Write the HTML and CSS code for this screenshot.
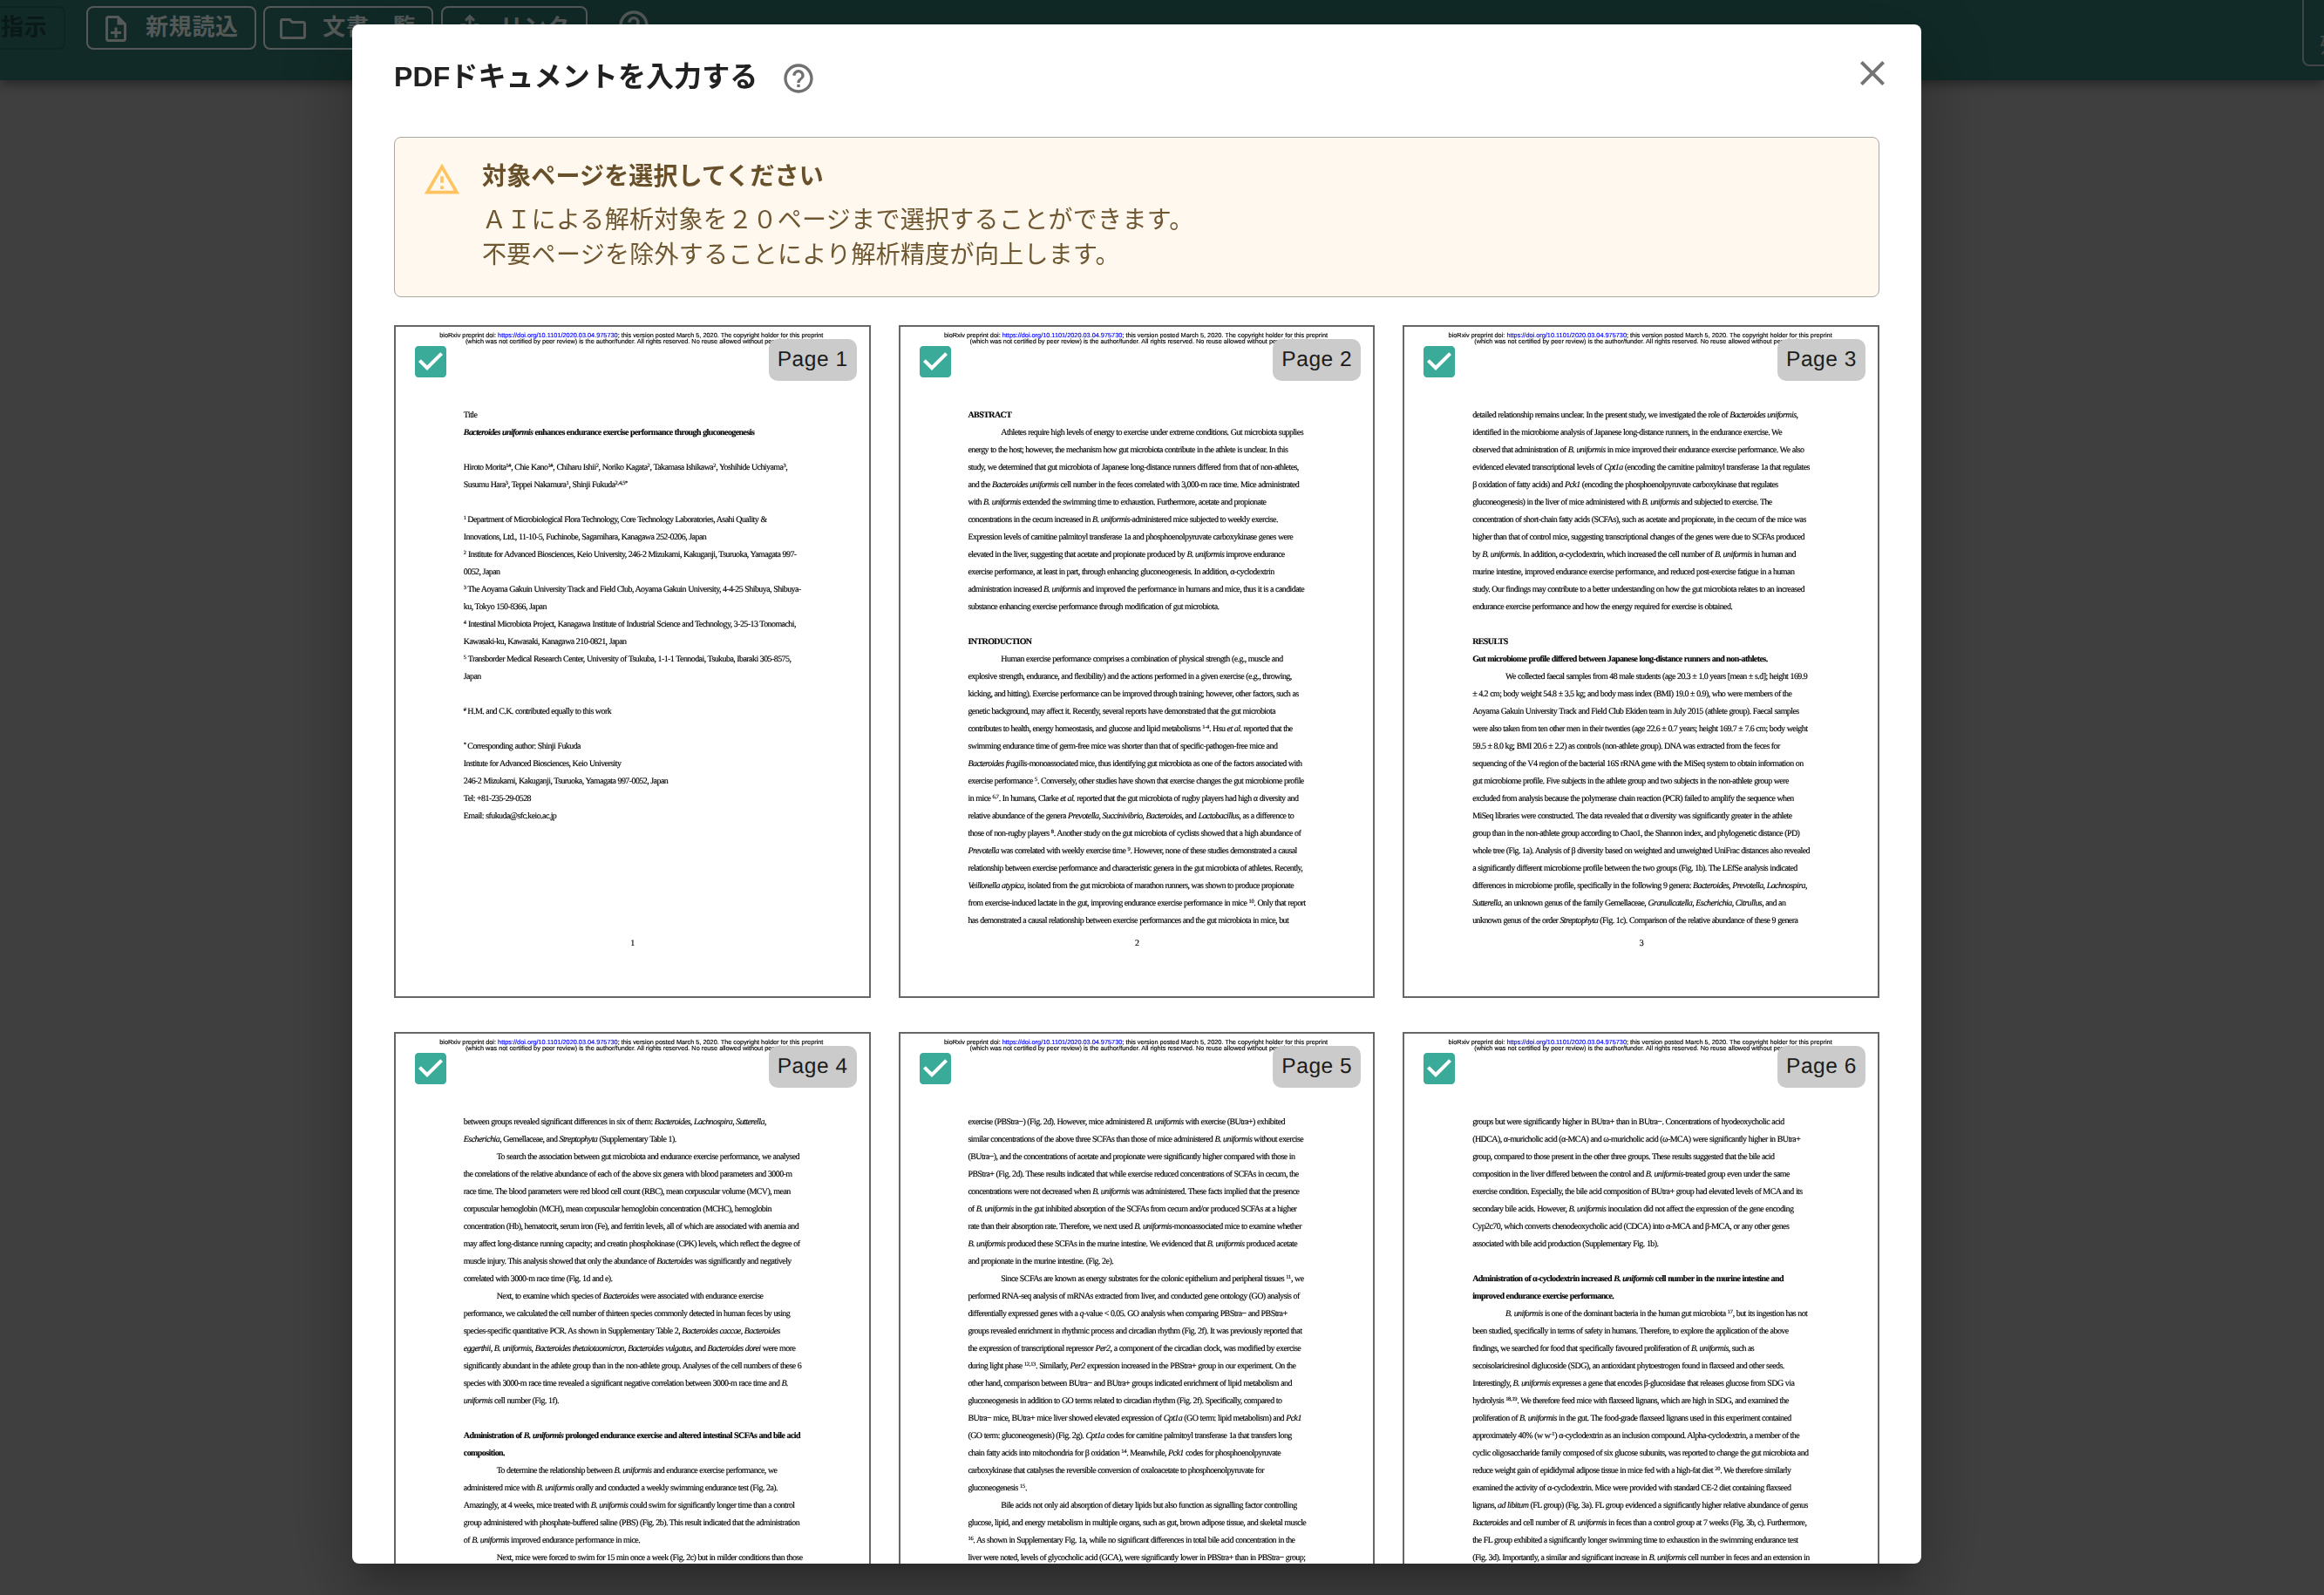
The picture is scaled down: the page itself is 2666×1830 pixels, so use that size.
FILE: index.html
```
<!DOCTYPE html>
<html lang="ja">
<head>
<meta charset="utf-8">
<title>PDFドキュメントを入力する</title>
<link rel="stylesheet" href="styles.css">
</head>
<body>
<header class="appbar">
  <div class="toolbar">
    <button class="tool tool-disabled">指示</button>
    <button class="tool"><svg viewBox="0 0 24 24"><path d="M13 11h-2v3H8v2h3v3h2v-3h3v-2h-3v-3zm1-9H6c-1.100 0-2 .9-2 2v16c0 1.100.890 2 1.990 2H18c1.100 0 2-.9 2-2V8l-6-6zm4 18H6V4h7v5h5v11z"/></svg>新規読込</button>
    <button class="tool"><svg viewBox="0 0 24 24"><path d="M9.170 6l2 2H20v10H4V6h5.170M10 4H4c-1.100 0-1.990.9-1.990 2L2 18c0 1.100.9 2 2 2h16c1.100 0 2-.9 2-2V8c0-1.100-.9-2-2-2h-8l-2-2z"/></svg>文書一覧</button>
    <button class="tool"><svg viewBox="0 0 24 24"><path d="M16 5l-1.420 1.420-1.590-1.590V16h-1.980V4.830L9.420 6.420 8 5l4-4 4 4zm4 5v11c0 1.100-.9 2-2 2H6c-1.110 0-2-.9-2-2V10c0-1.110.890-2 2-2h3v2H6v11h12V10h-3V8h3c1.100 0 2 .890 2 2z"/></svg>リンク</button>
    <svg class="help-top" viewBox="0 0 24 24"><path d="M11 18h2v-2h-2v2zm1-16C6.480 2 2 6.480 2 12s4.480 10 10 10 10-4.480 10-10S17.520 2 12 2zm0 18c-4.410 0-8-3.590-8-8s3.590-8 8-8 8 3.590 8 8-3.590 8-8 8zm0-14c-2.210 0-4 1.790-4 4h2c0-1.100.9-2 2-2s2 .9 2 2c0 2-3 1.750-3 5h2c0-2.250 3-2.500 3-5 0-2.210-1.790-4-4-4z"/></svg>
  </div>
  <div class="quota"><span>残</span></div>
</header>

<div class="backdrop">
<main class="dialog">
  <div class="dialog-head">
    <h1>PDFドキュメントを入力する</h1>
    <svg class="help" viewBox="0 0 24 24"><path d="M11 18h2v-2h-2v2zm1-16C6.480 2 2 6.480 2 12s4.480 10 10 10 10-4.480 10-10S17.520 2 12 2zm0 18c-4.410 0-8-3.590-8-8s3.590-8 8-8 8 3.590 8 8-3.590 8-8 8zm0-14c-2.210 0-4 1.790-4 4h2c0-1.100.9-2 2-2s2 .9 2 2c0 2-3 1.750-3 5h2c0-2.250 3-2.500 3-5 0-2.210-1.790-4-4-4z"/></svg>
    <svg class="close" viewBox="0 0 24 24"><path d="M19 6.410 17.590 5 12 10.590 6.410 5 5 6.410 10.590 12 5 17.590 6.410 19 12 13.410 17.590 19 19 17.590 13.410 12z"/></svg>
  </div>

  <section class="alert">
    <svg class="warn" viewBox="0 0 24 24"><path d="M12 5.990L19.530 19H4.470L12 5.990M12 2L1 21h22L12 2zm1 14h-2v2h2v-2zm0-6h-2v4h2v-4z"/></svg>
    <div>
      <h2>対象ページを選択してください</h2>
      <p>ＡＩによる解析対象を２０ページまで選択することができます。<br>不要ページを除外することにより解析精度が向上します。</p>
    </div>
  </section>

  <div class="pages">
    <article class="page">
      <div class="stamp">bioRxiv preprint doi: <a>https://doi.org/10.1101/2020.03.04.975730</a>; this version posted March 5, 2020. The copyright holder for this preprint<br>(which was not certified by peer review) is the author/funder. All rights reserved. No reuse allowed without permission.</div>
      <div class="check"><svg viewBox="0 0 24 24"><path d="M19 3H5c-1.110 0-2 .9-2 2v14c0 1.100.890 2 2 2h14c1.110 0 2-.9 2-2V5c0-1.100-.890-2-2-2zm-9 14l-5-5 1.410-1.410L10 14.170l7.590-7.590L19 8l-9 9z"/></svg></div>
      <div class="badge">Page 1</div>
      <div class="text">
<p>Title</p>
<p><b><i>Bacteroides uniformis</i> enhances endurance exercise performance through gluconeogenesis</b></p>
<p></p>
<p>Hiroto Morita<sup>1#</sup>, Chie Kano<sup>1#</sup>, Chiharu Ishii<sup>2</sup>, Noriko Kagata<sup>2</sup>, Takamasa Ishikawa<sup>2</sup>, Yoshihide Uchiyama<sup>3</sup>,</p>
<p>Susumu Hara<sup>3</sup>, Teppei Nakamura<sup>1</sup>, Shinji Fukuda<sup>2,4,5*</sup></p>
<p></p>
<p><sup>1 </sup>Department of Microbiological Flora Technology, Core Technology Laboratories, Asahi Quality &amp;</p>
<p>Innovations, Ltd., 11-10-5, Fuchinobe, Sagamihara, Kanagawa 252-0206, Japan</p>
<p><sup>2</sup> Institute for Advanced Biosciences, Keio University, 246-2 Mizukami, Kakuganji, Tsuruoka, Yamagata 997-</p>
<p>0052, Japan</p>
<p><sup>3 </sup>The Aoyama Gakuin University Track and Field Club, Aoyama Gakuin University, 4-4-25 Shibuya, Shibuya-</p>
<p>ku, Tokyo 150-8366, Japan</p>
<p><sup>4</sup> Intestinal Microbiota Project, Kanagawa Institute of Industrial Science and Technology, 3-25-13 Tonomachi,</p>
<p>Kawasaki-ku, Kawasaki, Kanagawa 210-0821, Japan</p>
<p><sup>5</sup> Transborder Medical Research Center, University of Tsukuba, 1-1-1 Tennodai, Tsukuba, Ibaraki 305-8575,</p>
<p>Japan</p>
<p></p>
<p><sup># </sup>H.M. and C.K. contributed equally to this work</p>
<p></p>
<p><sup>* </sup>Corresponding author: Shinji Fukuda</p>
<p>Institute for Advanced Biosciences, Keio University</p>
<p>246-2 Mizukami, Kakuganji, Tsuruoka, Yamagata 997-0052, Japan</p>
<p>Tel: +81-235-29-0528</p>
<p>Email: sfukuda@sfc.keio.ac.jp</p>
      </div>
      <div class="folio">1</div>
    </article>

    <article class="page">
      <div class="stamp">bioRxiv preprint doi: <a>https://doi.org/10.1101/2020.03.04.975730</a>; this version posted March 5, 2020. The copyright holder for this preprint<br>(which was not certified by peer review) is the author/funder. All rights reserved. No reuse allowed without permission.</div>
      <div class="check"><svg viewBox="0 0 24 24"><path d="M19 3H5c-1.110 0-2 .9-2 2v14c0 1.100.890 2 2 2h14c1.110 0 2-.9 2-2V5c0-1.100-.890-2-2-2zm-9 14l-5-5 1.410-1.410L10 14.170l7.590-7.590L19 8l-9 9z"/></svg></div>
      <div class="badge">Page 2</div>
      <div class="text">
<p><b>ABSTRACT</b></p>
<p class="in">Athletes require high levels of energy to exercise under extreme conditions. Gut microbiota supplies</p>
<p>energy to the host; however, the mechanism how gut microbiota contribute in the athlete is unclear. In this</p>
<p>study, we determined that gut microbiota of Japanese long-distance runners differed from that of non-athletes,</p>
<p>and the <i>Bacteroides uniformis</i> cell number in the feces correlated with 3,000-m race time. Mice administrated</p>
<p>with <i>B. uniformis</i> extended the swimming time to exhaustion. Furthermore, acetate and propionate</p>
<p>concentrations in the cecum increased in <i>B. uniformis</i>-administered mice subjected to weekly exercise.</p>
<p>Expression levels of carnitine palmitoyl transferase 1a and phosphoenolpyruvate carboxykinase genes were</p>
<p>elevated in the liver, suggesting that acetate and propionate produced by <i>B. uniformis</i> improve endurance</p>
<p>exercise performance, at least in part, through enhancing gluconeogenesis. In addition, α-cyclodextrin</p>
<p>administration increased <i>B. uniformis</i> and improved the performance in humans and mice, thus it is a candidate</p>
<p>substance enhancing exercise performance through modification of gut microbiota.</p>
<p></p>
<p><b>INTRODUCTION</b></p>
<p class="in">Human exercise performance comprises a combination of physical strength (e.g., muscle and</p>
<p>explosive strength, endurance, and flexibility) and the actions performed in a given exercise (e.g., throwing,</p>
<p>kicking, and hitting). Exercise performance can be improved through training; however, other factors, such as</p>
<p>genetic background, may affect it. Recently, several reports have demonstrated that the gut microbiota</p>
<p>contributes to health, energy homeostasis, and glucose and lipid metabolisms <sup>1-4</sup>. Hsu <i>et al.</i> reported that the</p>
<p>swimming endurance time of germ-free mice was shorter than that of specific-pathogen-free mice and</p>
<p><i>Bacteroides fragilis</i>-monoassociated mice, thus identifying gut microbiota as one of the factors associated with</p>
<p>exercise performance <sup>5</sup>. Conversely, other studies have shown that exercise changes the gut microbiome profile</p>
<p>in mice <sup>6,7</sup>. In humans, Clarke <i>et al.</i> reported that the gut microbiota of rugby players had high α diversity and</p>
<p>relative abundance of the genera <i>Prevotella</i>, <i>Succinivibrio</i>, <i>Bacteroides</i>, and <i>Lactobacillus</i>, as a difference to</p>
<p>those of non-rugby players <sup>8</sup>. Another study on the gut microbiota of cyclists showed that a high abundance of</p>
<p><i>Prevotella</i> was correlated with weekly exercise time <sup>9</sup>. However, none of these studies demonstrated a causal</p>
<p>relationship between exercise performance and characteristic genera in the gut microbiota of athletes. Recently,</p>
<p><i>Veillonella atypica</i>, isolated from the gut microbiota of marathon runners, was shown to produce propionate</p>
<p>from exercise-induced lactate in the gut, improving endurance exercise performance in mice <sup>10</sup>. Only that report</p>
<p>has demonstrated a causal relationship between exercise performances and the gut microbiota in mice, but</p>
      </div>
      <div class="folio">2</div>
    </article>

    <article class="page">
      <div class="stamp">bioRxiv preprint doi: <a>https://doi.org/10.1101/2020.03.04.975730</a>; this version posted March 5, 2020. The copyright holder for this preprint<br>(which was not certified by peer review) is the author/funder. All rights reserved. No reuse allowed without permission.</div>
      <div class="check"><svg viewBox="0 0 24 24"><path d="M19 3H5c-1.110 0-2 .9-2 2v14c0 1.100.890 2 2 2h14c1.110 0 2-.9 2-2V5c0-1.100-.890-2-2-2zm-9 14l-5-5 1.410-1.410L10 14.170l7.590-7.590L19 8l-9 9z"/></svg></div>
      <div class="badge">Page 3</div>
      <div class="text">
<p>detailed relationship remains unclear. In the present study, we investigated the role of <i>Bacteroides uniformis</i>,</p>
<p>identified in the microbiome analysis of Japanese long-distance runners, in the endurance exercise. We</p>
<p>observed that administration of <i>B. uniformis</i> in mice improved their endurance exercise performance. We also</p>
<p>evidenced elevated transcriptional levels of <i>Cpt1a</i> (encoding the carnitine palmitoyl transferase 1a that regulates</p>
<p>β oxidation of fatty acids) and <i>Pck1</i> (encoding the phosphoenolpyruvate carboxykinase that regulates</p>
<p>gluconeogenesis) in the liver of mice administered with <i>B. uniformis</i> and subjected to exercise. The</p>
<p>concentration of short-chain fatty acids (SCFAs), such as acetate and propionate, in the cecum of the mice was</p>
<p>higher than that of control mice, suggesting transcriptional changes of the genes were due to SCFAs produced</p>
<p>by <i>B. uniformis</i>. In addition, α-cyclodextrin, which increased the cell number of <i>B. uniformis</i> in human and</p>
<p>murine intestine, improved endurance exercise performance, and reduced post-exercise fatigue in a human</p>
<p>study. Our findings may contribute to a better understanding on how the gut microbiota relates to an increased</p>
<p>endurance exercise performance and how the energy required for exercise is obtained.</p>
<p></p>
<p><b>RESULTS</b></p>
<p><b>Gut microbiome profile differed between Japanese long-distance runners and non-athletes.</b></p>
<p class="in">We collected faecal samples from 48 male students (age 20.3 ± 1.0 years [mean ± s.d]; height 169.9</p>
<p>± 4.2 cm; body weight 54.8 ± 3.5 kg; and body mass index (BMI) 19.0 ± 0.9), who were members of the</p>
<p>Aoyama Gakuin University Track and Field Club Ekiden team in July 2015 (athlete group). Faecal samples</p>
<p>were also taken from ten other men in their twenties (age 22.6 ± 0.7 years; height 169.7 ± 7.6 cm; body weight</p>
<p>59.5 ± 8.0 kg; BMI 20.6 ± 2.2) as controls (non-athlete group). DNA was extracted from the feces for</p>
<p>sequencing of the V4 region of the bacterial 16S rRNA gene with the MiSeq system to obtain information on</p>
<p>gut microbiome profile. Five subjects in the athlete group and two subjects in the non-athlete group were</p>
<p>excluded from analysis because the polymerase chain reaction (PCR) failed to amplify the sequence when</p>
<p>MiSeq libraries were constructed. The data revealed that α diversity was significantly greater in the athlete</p>
<p>group than in the non-athlete group according to Chao1, the Shannon index, and phylogenetic distance (PD)</p>
<p>whole tree (Fig. 1a). Analysis of β diversity based on weighted and unweighted UniFrac distances also revealed</p>
<p>a significantly different microbiome profile between the two groups (Fig. 1b). The LEfSe analysis indicated</p>
<p>differences in microbiome profile, specifically in the following 9 genera: <i>Bacteroides</i>, <i>Prevotella</i>, <i>Lachnospira</i>,</p>
<p><i>Sutterella</i>, an unknown genus of the family Gemellaceae, <i>Granulicatella</i>, <i>Escherichia</i>, <i>Citrullus</i>, and an</p>
<p>unknown genus of the order <i>Streptophyta</i> (Fig. 1c). Comparison of the relative abundance of these 9 genera</p>
      </div>
      <div class="folio">3</div>
    </article>

    <article class="page">
      <div class="stamp">bioRxiv preprint doi: <a>https://doi.org/10.1101/2020.03.04.975730</a>; this version posted March 5, 2020. The copyright holder for this preprint<br>(which was not certified by peer review) is the author/funder. All rights reserved. No reuse allowed without permission.</div>
      <div class="check"><svg viewBox="0 0 24 24"><path d="M19 3H5c-1.110 0-2 .9-2 2v14c0 1.100.890 2 2 2h14c1.110 0 2-.9 2-2V5c0-1.100-.890-2-2-2zm-9 14l-5-5 1.410-1.410L10 14.170l7.590-7.590L19 8l-9 9z"/></svg></div>
      <div class="badge">Page 4</div>
      <div class="text">
<p>between groups revealed significant differences in six of them: <i>Bacteroides</i>, <i>Lachnospira</i>, <i>Sutterella</i>,</p>
<p><i>Escherichia</i>, Gemellaceae, and <i>Streptophyta</i> (Supplementary Table 1).</p>
<p class="in">To search the association between gut microbiota and endurance exercise performance, we analysed</p>
<p>the correlations of the relative abundance of each of the above six genera with blood parameters and 3000-m</p>
<p>race time. The blood parameters were red blood cell count (RBC), mean corpuscular volume (MCV), mean</p>
<p>corpuscular hemoglobin (MCH), mean corpuscular hemoglobin concentration (MCHC), hemoglobin</p>
<p>concentration (Hb), hematocrit, serum iron (Fe), and ferritin levels, all of which are associated with anemia and</p>
<p>may affect long-distance running capacity; and creatin phosphokinase (CPK) levels, which reflect the degree of</p>
<p>muscle injury. This analysis showed that only the abundance of <i>Bacteroides</i> was significantly and negatively</p>
<p>correlated with 3000-m race time (Fig. 1d and e).</p>
<p class="in">Next, to examine which species of <i>Bacteroides</i> were associated with endurance exercise</p>
<p>performance, we calculated the cell number of thirteen species commonly detected in human feces by using</p>
<p>species-specific quantitative PCR. As shown in Supplementary Table 2, <i>Bacteroides caccae</i>, <i>Bacteroides</i></p>
<p><i>eggerthii</i>, <i>B. uniformis</i>, <i>Bacteroides thetaiotaomicron</i>, <i>Bacteroides vulgatus</i>, and <i>Bacteroides dorei</i> were more</p>
<p>significantly abundant in the athlete group than in the non-athlete group. Analyses of the cell numbers of these 6</p>
<p>species with 3000-m race time revealed a significant negative correlation between 3000-m race time and <i>B.</i></p>
<p><i>uniformis</i> cell number (Fig. 1f).</p>
<p></p>
<p><b>Administration of <i>B. uniformis</i> prolonged endurance exercise and altered intestinal SCFAs and bile acid</b></p>
<p><b>composition.</b></p>
<p class="in">To determine the relationship between <i>B. uniformis</i> and endurance exercise performance, we</p>
<p>administered mice with <i>B. uniformis</i> orally and conducted a weekly swimming endurance test (Fig. 2a).</p>
<p>Amazingly, at 4 weeks, mice treated with <i>B. uniformis</i> could swim for significantly longer time than a control</p>
<p>group administered with phosphate-buffered saline (PBS) (Fig. 2b). This result indicated that the administration</p>
<p>of <i>B. uniformis</i> improved endurance performance in mice.</p>
<p class="in">Next, mice were forced to swim for 15 min once a week (Fig. 2c) but in milder conditions than those</p>
      </div>
    </article>

    <article class="page">
      <div class="stamp">bioRxiv preprint doi: <a>https://doi.org/10.1101/2020.03.04.975730</a>; this version posted March 5, 2020. The copyright holder for this preprint<br>(which was not certified by peer review) is the author/funder. All rights reserved. No reuse allowed without permission.</div>
      <div class="check"><svg viewBox="0 0 24 24"><path d="M19 3H5c-1.110 0-2 .9-2 2v14c0 1.100.890 2 2 2h14c1.110 0 2-.9 2-2V5c0-1.100-.890-2-2-2zm-9 14l-5-5 1.410-1.410L10 14.170l7.590-7.590L19 8l-9 9z"/></svg></div>
      <div class="badge">Page 5</div>
      <div class="text">
<p>exercise (PBStra−) (Fig. 2d). However, mice administered <i>B. uniformis</i> with exercise (BUtra+) exhibited</p>
<p>similar concentrations of the above three SCFAs than those of mice administered <i>B. uniformis</i> without exercise</p>
<p>(BUtra−), and the concentrations of acetate and propionate were significantly higher compared with those in</p>
<p>PBStra+ (Fig. 2d). These results indicated that while exercise reduced concentrations of SCFAs in cecum, the</p>
<p>concentrations were not decreased when <i>B. uniformis</i> was administered. These facts implied that the presence</p>
<p>of <i>B. uniformis</i> in the gut inhibited absorption of the SCFAs from cecum and/or produced SCFAs at a higher</p>
<p>rate than their absorption rate. Therefore, we next used <i>B. uniformis</i>-monoassociated mice to examine whether</p>
<p><i>B. uniformis</i> produced these SCFAs in the murine intestine. We evidenced that <i>B. uniformis</i> produced acetate</p>
<p>and propionate in the murine intestine. (Fig. 2e).</p>
<p class="in">Since SCFAs are known as energy substrates for the colonic epithelium and peripheral tissues <sup>11</sup>, we</p>
<p>performed RNA-seq analysis of mRNAs extracted from liver, and conducted gene ontology (GO) analysis of</p>
<p>differentially expressed genes with a <i>q</i>-value &lt; 0.05. GO analysis when comparing PBStra− and PBStra+</p>
<p>groups revealed enrichment in rhythmic process and circadian rhythm (Fig. 2f). It was previously reported that</p>
<p>the expression of transcriptional repressor <i>Per2</i>, a component of the circadian clock, was modified by exercise</p>
<p>during light phase <sup>12,13</sup>. Similarly, <i>Per2</i> expression increased in the PBStra+ group in our experiment. On the</p>
<p>other hand, comparison between BUtra− and BUtra+ groups indicated enrichment of lipid metabolism and</p>
<p>gluconeogenesis in addition to GO terms related to circadian rhythm (Fig. 2f). Specifically, compared to</p>
<p>BUtra− mice, BUtra+ mice liver showed elevated expression of <i>Cpt1a</i> (GO term: lipid metabolism) and <i>Pck1</i></p>
<p>(GO term: gluconeogenesis) (Fig. 2g). <i>Cpt1a</i> codes for carnitine palmitoyl transferase 1a that transfers long</p>
<p>chain fatty acids into mitochondria for β oxidation <sup>14</sup>. Meanwhile, <i>Pck1</i> codes for phosphoenolpyruvate</p>
<p>carboxykinase that catalyses the reversible conversion of oxaloacetate to phosphoenolpyruvate for</p>
<p>gluconeogenesis <sup>15</sup>.</p>
<p class="in">Bile acids not only aid absorption of dietary lipids but also function as signalling factor controlling</p>
<p>glucose, lipid, and energy metabolism in multiple organs, such as gut, brown adipose tissue, and skeletal muscle</p>
<p><sup>16</sup>. As shown in Supplementary Fig. 1a, while no significant differences in total bile acid concentration in the</p>
<p>liver were noted, levels of glycocholic acid (GCA), were significantly lower in PBStra+ than in PBStra− group;</p>
      </div>
    </article>

    <article class="page">
      <div class="stamp">bioRxiv preprint doi: <a>https://doi.org/10.1101/2020.03.04.975730</a>; this version posted March 5, 2020. The copyright holder for this preprint<br>(which was not certified by peer review) is the author/funder. All rights reserved. No reuse allowed without permission.</div>
      <div class="check"><svg viewBox="0 0 24 24"><path d="M19 3H5c-1.110 0-2 .9-2 2v14c0 1.100.890 2 2 2h14c1.110 0 2-.9 2-2V5c0-1.100-.890-2-2-2zm-9 14l-5-5 1.410-1.410L10 14.170l7.590-7.590L19 8l-9 9z"/></svg></div>
      <div class="badge">Page 6</div>
      <div class="text">
<p>groups but were significantly higher in BUtra+ than in BUtra−. Concentrations of hyodeoxycholic acid</p>
<p>(HDCA), α-muricholic acid (α-MCA) and ω-muricholic acid (ω-MCA) were significantly higher in BUtra+</p>
<p>group, compared to those present in the other three groups. These results suggested that the bile acid</p>
<p>composition in the liver differed between the control and <i>B. uniformis</i>-treated group even under the same</p>
<p>exercise condition. Especially, the bile acid composition of BUtra+ group had elevated levels of MCA and its</p>
<p>secondary bile acids. However, <i>B. uniformis</i> inoculation did not affect the expression of the gene encoding</p>
<p>Cyp2c70, which converts chenodeoxycholic acid (CDCA) into α-MCA and β-MCA, or any other genes</p>
<p>associated with bile acid production (Supplementary Fig. 1b).</p>
<p></p>
<p><b>Administration of α-cyclodextrin increased <i>B. uniformis</i> cell number in the murine intestine and</b></p>
<p><b>improved endurance exercise performance.</b></p>
<p class="in"><i>B. uniformis</i> is one of the dominant bacteria in the human gut microbiota <sup>17</sup>, but its ingestion has not</p>
<p>been studied, specifically in terms of safety in humans. Therefore, to explore the application of the above</p>
<p>findings, we searched for food that specifically favoured proliferation of <i>B. uniformis</i>, such as</p>
<p>secoisolariciresinol diglucoside (SDG), an antioxidant phytoestrogen found in flaxseed and other seeds.</p>
<p>Interestingly, <i>B. uniformis</i> expresses a gene that encodes β-glucosidase that releases glucose from SDG via</p>
<p>hydrolysis <sup>18,19</sup>. We therefore feed mice with flaxseed lignans, which are high in SDG, and examined the</p>
<p>proliferation of <i>B. uniformis</i> in the gut. The food-grade flaxseed lignans used in this experiment contained</p>
<p>approximately 40% (w w<sup>-1</sup>) α-cyclodextrin as an inclusion compound. Alpha-cyclodextrin, a member of the</p>
<p>cyclic oligosaccharide family composed of six glucose subunits, was reported to change the gut microbiota and</p>
<p>reduce weight gain of epididymal adipose tissue in mice fed with a high-fat diet <sup>20</sup>. We therefore similarly</p>
<p>examined the activity of α-cyclodextrin. Mice were provided with standard CE-2 diet containing flaxseed</p>
<p>lignans, <i>ad libitum</i> (FL group) (Fig. 3a). FL group evidenced a significantly higher relative abundance of genus</p>
<p><i>Bacteroides</i> and cell number of <i>B. uniformis</i> in feces than a control group at 7 weeks (Fig. 3b, c). Furthermore,</p>
<p>the FL group exhibited a significantly longer swimming time to exhaustion in the swimming endurance test</p>
<p>(Fig. 3d). Importantly, a similar and significant increase in <i>B. uniformis</i> cell number in feces and an extension in</p>
      </div>
    </article>
  </div>
</main>
</div>
</body>
</html>
```
FILE: styles.css
```
* { box-sizing: border-box; }
html, body { height: 100%; margin: 0; overflow: hidden; }
body {
  background: #7f7f7f;
  font-family: "Liberation Sans", "Noto Sans CJK JP", sans-serif;
}
h1, h2, p { margin: 0; }
svg { display: block; flex: none; fill: currentColor; }

/* App bar behind the dialog */
.appbar {
  height: 92px;
  display: flex;
  justify-content: space-between;
  background: #22544e;
  box-shadow: 0 4px 8px -2px rgba(0,0,0,.2), 0 8px 10px rgba(0,0,0,.14), 0 2px 20px rgba(0,0,0,.12);
}
.toolbar { display: flex; align-items: flex-start; gap: 8.500px; padding-top: 7px; color: #a8b3b1; }
.tool {
  display: flex;
  align-items: center;
  gap: 16.500px;
  height: 50px;
  padding: 0 18px 2px 13.500px;
  border: 2px solid currentColor;
  border-radius: 8px;
  background: none;
  color: inherit;
  font: 700 26px/1 "Liberation Sans", "Noto Sans CJK JP", sans-serif;
  letter-spacing: .7px;
  white-space: nowrap;
}
.tool svg { width: 36px; height: 36px; margin-top: 3px; }
.tool-disabled {
  width: 140px;
  justify-content: flex-end;
  margin: 0 16px 0 -65.500px;
  color: #14322f;
  border-color: #1d4843;
}
.help-top { width: 40px; height: 40px; margin: 2px 0 0 25px; }
.quota {
  width: 60px;
  height: 96px;
  margin: -20px -35px 0 0;
  padding: 55px 0 0 18px;
  border: 2px solid #858b8a;
  border-radius: 8px;
  color: #858b8a;
  font-size: 24px;
  line-height: 30px;
  overflow: hidden;
}

.backdrop {
  position: fixed;
  inset: 0;
  padding: 28px 462px 36px 404px;
  background: rgba(0,0,0,.5);
}
.dialog {
  height: 1766px;
  padding: 0 48px;
  overflow: hidden;
  background: #fff;
  border-radius: 8px;
  box-shadow: 0 22px 30px -14px rgba(0,0,0,.2), 0 48px 76px 6px rgba(0,0,0,.14), 0 18px 92px 16px rgba(0,0,0,.12);
}
.dialog-head { display: flex; align-items: center; height: 129px; color: #707070; }
.dialog-head h1 { margin-bottom: 10px; font-size: 32px; line-height: 48px; font-weight: 700; letter-spacing: .1px; color: #212121; }
.help { width: 40px; height: 40px; margin: 0 0 5px 27px; }
.close { width: 48px; height: 48px; margin: 0 -16px 17px auto; color: #757575; }

.alert {
  display: flex;
  height: 184px;
  padding: 27px 32px;
  border: 1px solid #aaa89f;
  border-radius: 8px;
  background: #fff8ee;
  color: #67502a;
}
.warn { width: 44px; height: 44px; margin: -1px 24px 0 0; color: #ffc35f; }
.alert h2 { font-size: 28px; line-height: 34px; font-weight: 700; letter-spacing: .15px; margin: 1px 0 12.500px; }
.alert p { font-size: 28px; line-height: 40px; letter-spacing: .3px; color: #6f5731; white-space: nowrap; }

.pages {
  display: grid;
  grid-template-columns: repeat(3, minmax(0, 1fr));
  grid-auto-rows: 772px;
  gap: 39px 32px;
  margin-top: 32px;
}
.page {
  position: relative;
  padding: 92px 0 0 77.800px;
  border: 2px solid #666;
  background: #fff;
  overflow: hidden;
  text-rendering: geometricPrecision;
}
.stamp {
  position: absolute;
  top: 6px;
  left: -1px;
  width: 100%;
  text-align: center;
  white-space: nowrap;
  font-size: 7.340px;
  line-height: 7.200px;
  color: #000;
  -webkit-text-stroke: .15px currentColor;
}
.stamp a { color: #00f; }
.check { position: absolute; left: 16px; top: 16px; width: 48px; height: 48px; color: #3aaa99; }
.check svg { width: 48px; height: 48px; }
.badge {
  position: absolute;
  top: 14px;
  right: 14px;
  width: 101px;
  height: 48px;
  border-radius: 10px;
  background: #cbcbcb;
  color: #1c1c1c;
  font-size: 24.500px;
  line-height: 47px;
  letter-spacing: .55px;
  text-align: center;
}
.text {
  font-family: "Liberation Serif", serif;
  font-size: 10px;
  line-height: 19.990px;
  letter-spacing: -.58px;
  word-spacing: .25px;
  color: #000;
  white-space: nowrap;
  -webkit-text-stroke: .15px currentColor;
}
.text p { height: 19.990px; }
.text .in { padding-left: 37.900px; }
.text sup { font-size: 6.500px; line-height: 0; vertical-align: 3.500px; letter-spacing: -.3px; }
.folio {
  position: absolute;
  top: 698px;
  left: .5px;
  width: 100%;
  text-align: center;
  font: 10px/20px "Liberation Serif", serif;
  -webkit-text-stroke: .15px currentColor;
}
```
